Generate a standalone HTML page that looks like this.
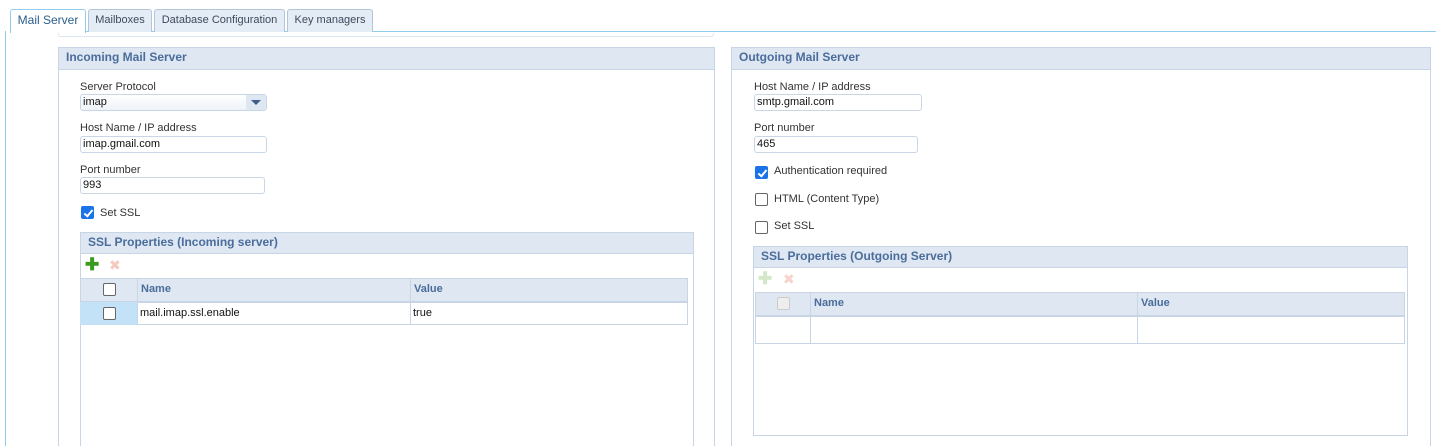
<!DOCTYPE html><html><head><style>
*{box-sizing:border-box;margin:0;padding:0}
html,body{width:1436px;height:446px;overflow:hidden}
body{background:#fff;font-family:"Liberation Sans",sans-serif;font-size:11px;color:#333;position:relative}
.a{position:absolute}
.tab{position:absolute;top:9px;height:23px;background:#e4ecf6;border:1px solid #b3c5da;border-bottom:none;border-radius:3px 3px 0 0;color:#3d4a5c;font-size:11px;text-align:center;line-height:21px}
.ph{position:absolute;background:#dfe7f2;border:1px solid #c8d5e5;color:#4a6d9c;font-weight:bold;font-size:12px;padding-left:7px;line-height:18px}
.pb{position:absolute;border:1px solid #c8d5e5;border-top:none}
.lbl{position:absolute;font-size:11px;color:#333}
.inp{position:absolute;height:17px;border:1px solid #c9d6e6;border-radius:3px;font-size:11px;padding-left:2px;line-height:15px;color:#111}
.cb{position:absolute;width:13px;height:13px;border:1px solid #666;border-radius:2px;background:#fff}
.cbk{background:#1a73e8;border-color:#1a73e8}
.cbk:after{content:"";position:absolute;left:3.5px;top:0.5px;width:3px;height:7px;border:solid #fff;border-width:0 2px 2px 0;transform:rotate(40deg)}
.gh{position:absolute;background:#dfe7f2;border:1px solid #c8d5e5;color:#4a6d9c;font-weight:bold;font-size:11px;line-height:21px;padding-left:3px}
.gc{position:absolute;border:1px solid #c8d5e5;font-size:11px;line-height:21px;padding-left:2px;color:#111}
</style></head><body>
<div class="a" style="left:86px;top:31px;width:1350px;height:1px;background:#8fcdee"></div>
<div class="a" style="left:5px;top:31px;width:1px;height:415px;background:#8fcdee"></div>
<div class="tab" style="left:10px;width:76px;height:24px;background:#fff;border-color:#8fcdee;color:#2b5e8c;font-size:12px">Mail Server</div>
<div class="tab" style="left:88px;width:64px">Mailboxes</div>
<div class="tab" style="left:154px;width:131px">Database Configuration</div>
<div class="tab" style="left:287px;width:86px">Key managers</div>
<div class="a" style="left:58px;top:33px;width:656px;height:4px;border:1px solid #dde5ef;border-top:none;border-radius:0 0 3px 3px"></div>

<div class="ph" style="left:58px;top:47px;width:657px;height:23px">Incoming Mail Server</div>
<div class="pb" style="left:58px;top:70px;width:657px;height:376px;border-bottom:none"></div>
<div class="lbl" style="left:80px;top:81px">Server Protocol</div>
<div class="inp" style="left:80px;top:94px;width:187px;background:linear-gradient(#fff,#eef2f7)">imap<div class="a" style="right:0;top:0;width:20px;height:15px;background:#dfe7f2"><div class="a" style="left:5px;top:5px;border-left:5px solid transparent;border-right:5px solid transparent;border-top:5px solid #3e5f8a"></div></div></div>
<div class="lbl" style="left:80px;top:122px">Host Name / IP address</div>
<div class="inp" style="left:80px;top:136px;width:187px">imap.gmail.com</div>
<div class="lbl" style="left:80px;top:164px">Port number</div>
<div class="inp" style="left:80px;top:177px;width:185px">993</div>
<div class="cb cbk" style="left:81px;top:206px"></div><div class="lbl" style="left:100px;top:207px">Set SSL</div>
<div class="ph" style="left:80px;top:232px;width:614px;height:22px">SSL Properties (Incoming server)</div>
<div class="pb" style="left:80px;top:254px;width:614px;height:192px;border-bottom:none"></div>
<div class="a" style="left:85px;top:258px;color:#3a9a1e;font-size:17px;font-weight:bold;line-height:14px">✚</div>
<div class="a" style="left:109px;top:258px;color:#f5c9c2;font-size:14px;line-height:14px">✖</div>
<div class="gh" style="left:80px;top:278px;width:58px;height:24px"></div>
<div class="cb" style="left:103px;top:283px"></div>
<div class="gh" style="left:137px;top:278px;width:274px;height:24px">Name</div>
<div class="gh" style="left:410px;top:278px;width:278px;height:24px">Value</div>
<div class="gc" style="left:80px;top:302px;width:58px;height:23px;background:#c3e2f7;border-color:#c3e2f7"></div>
<div class="cb" style="left:103px;top:307px"></div>
<div class="gc" style="left:137px;top:302px;width:274px;height:23px">mail.imap.ssl.enable</div>
<div class="gc" style="left:410px;top:302px;width:278px;height:23px">true</div>

<div class="ph" style="left:731px;top:47px;width:700px;height:23px">Outgoing Mail Server</div>
<div class="pb" style="left:731px;top:70px;width:700px;height:376px;border-bottom:none"></div>
<div class="lbl" style="left:754px;top:81px">Host Name / IP address</div>
<div class="inp" style="left:754px;top:94px;width:168px">smtp.gmail.com</div>
<div class="lbl" style="left:754px;top:122px">Port number</div>
<div class="inp" style="left:754px;top:136px;width:164px">465</div>
<div class="cb cbk" style="left:755px;top:166px"></div><div class="lbl" style="left:774px;top:165px">Authentication required</div>
<div class="cb" style="left:755px;top:193px"></div><div class="lbl" style="left:774px;top:193px">HTML (Content Type)</div>
<div class="cb" style="left:755px;top:221px"></div><div class="lbl" style="left:774px;top:220px">Set SSL</div>
<div class="ph" style="left:753px;top:246px;width:655px;height:22px">SSL Properties (Outgoing Server)</div>
<div class="pb" style="left:753px;top:268px;width:655px;height:168px"></div>
<div class="a" style="left:758px;top:272px;color:#d2e8c8;font-size:17px;font-weight:bold;line-height:14px">✚</div>
<div class="a" style="left:783px;top:272px;color:#f8d3cc;font-size:14px;line-height:14px">✖</div>
<div class="gh" style="left:755px;top:292px;width:56px;height:24px"></div>
<div class="cb" style="left:777px;top:297px;border-color:#ccc;background:#eee"></div>
<div class="gh" style="left:810px;top:292px;width:328px;height:24px">Name</div>
<div class="gh" style="left:1137px;top:292px;width:268px;height:24px">Value</div>
<div class="gc" style="left:755px;top:316px;width:56px;height:28px"></div>
<div class="gc" style="left:810px;top:316px;width:328px;height:28px"></div>
<div class="gc" style="left:1137px;top:316px;width:268px;height:28px"></div>
</body></html>
